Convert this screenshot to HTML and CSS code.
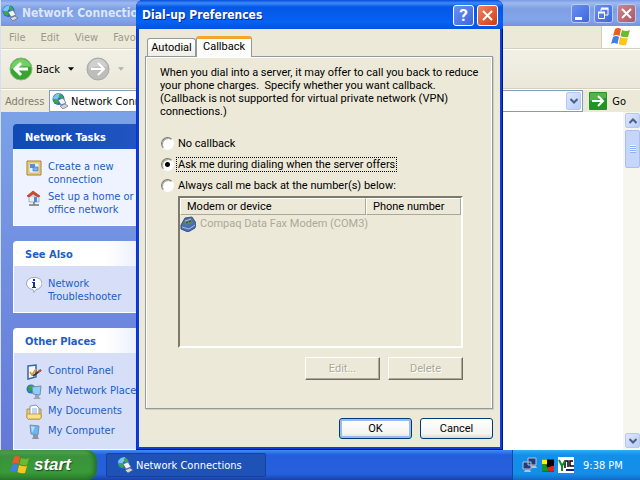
FILE: index.html
```html
<!DOCTYPE html>
<html lang="en">
<head>
    <meta charset="UTF-8">
    <meta name="viewport" content="width=device-width, initial-scale=1.0">
    <title>Network Connections</title>
    <link rel="stylesheet" href="styles.css">
</head>
<body>
    <!-- shared icons -->
    <svg class="defs" aria-hidden="true">
        <symbol id="netconn" viewBox="0 0 16 16">
            <circle cx="6.500" cy="6" r="6" fill="#2468d2"/>
            <path d="M1 4 4 1 8 0 9 3 6 5 5 8 2 8Z" fill="#7cc3f2"/>
            <path d="M7 1 10 2 12 6 9 6 7 4ZM2 6 5 6 7 9 5 11 2 9Z" fill="#38ad3f"/>
            <path d="M6 7 11 5 14 10 9 12Z" fill="#eef3f8" stroke="#5c6f8e" stroke-width=".8"/>
            <path d="M8 13 13 11 16 13 11 16Z" fill="#d5d8de" stroke="#5b6474" stroke-width=".7"/>
        </symbol>
        <symbol id="flag" viewBox="0 0 20 20">
            <path d="M4 2Q7 0 10 2L8.500 9Q5 7 2 9Z" fill="#ee5a24"/>
            <path d="M11 3Q15 5 19 3L17 10Q13 11 9.500 9Z" fill="#6dba2c"/>
            <path d="M2 10Q5 8 8 10L6.500 17Q3 15 0 17Z" fill="#3f7fe6"/>
            <path d="M9 10Q13 12 17 11L15 18Q11 19 7.500 17Z" fill="#fbc61c"/>
        </symbol>
        <symbol id="chevron" viewBox="0 0 8 6">
            <path d="M0.500 1 4 4.500 7.500 1" fill="none" stroke="#4d6185" stroke-width="2"/>
        </symbol>
    </svg>

    <div class="desktop">
        <div class="window">
            <div class="titlebar">
                <svg class="icon16"><use href="#netconn"/></svg>
                <h1>Network Connections</h1>
                <button class="win-btn" aria-label="Minimize"><svg viewBox="0 0 19 19"><path d="M4 13h7v3H4z" fill="#fff"/></svg></button>
                <button class="win-btn" aria-label="Restore"><svg viewBox="0 0 19 19"><path d="M7 7V5h7v6h-3M4.500 8.500h6v6h-6z" fill="none" stroke="#fff"/><path d="M7 4.500h7.500M4 8.500h7" stroke="#fff" stroke-width="2"/></svg></button>
                <button class="win-btn close" aria-label="Close"><svg viewBox="0 0 19 19"><path d="m5 5 9 9M14 5l-9 9" stroke="#fff" stroke-width="2"/></svg></button>
            </div>
            <div class="menubar">
                <button>File</button>
                <button>Edit</button>
                <button>View</button>
                <button>Favorites</button>
                <div class="brand"><svg><use href="#flag"/></svg></div>
            </div>
            <div class="toolbar">
                <button class="nav-btn">
                    <svg class="round" viewBox="0 0 24 24"><circle cx="12" cy="12" r="11" fill="#37a52e" stroke="#86b87d"/><path d="M2 12a10 9 0 0 1 20-2Q12 8 2 12Z" fill="#74cf62"/><path d="M19 12H7m5-6-6 6 6 6" fill="none" stroke="#fff" stroke-width="3"/></svg>
                    Back
                    <svg class="drop" viewBox="0 0 5 3"><path d="M0 0h5L2.500 3Z" fill="#000"/></svg>
                </button>
                <button class="nav-btn" disabled aria-label="Forward">
                    <svg class="round" viewBox="0 0 24 24"><circle cx="12" cy="12" r="11" fill="#bdbdbb" stroke="#a8a8a6"/><path d="M3 12a9 9 0 0 1 18-2Q12 8 3 12Z" fill="#d0d0ce"/><path d="M5 12h12m-5-6 6 6-6 6" fill="none" stroke="#fff" stroke-width="2"/></svg>
                    <svg class="drop" viewBox="0 0 5 3"><path d="M0 0h5L2.500 3Z" fill="#b5b2a4"/></svg>
                </button>
            </div>
            <div class="addressbar">
                <label for="address">Address</label>
                <div class="combo">
                    <svg class="icon16"><use href="#netconn"/></svg>
                    <input type="text" id="address" value="Network Connections">
                    <button class="scroll-btn" aria-label="Show addresses"><svg class="chev"><use href="#chevron"/></svg></button>
                </div>
                <button class="go"><svg viewBox="0 0 18 18"><rect width="18" height="18" rx="1" fill="#1f9428"/><path d="M1 1h16v5L1 9Z" fill="#4fb351"/><path d="M3 9h11M9 4l5 5-5 5" fill="none" stroke="#fff" stroke-width="2"/></svg>Go</button>
            </div>
            <div class="content">
                <div class="sidebar">
                    <div class="panel primary">
                        <h2>Network Tasks</h2>
                        <ul>
                            <li>
                                <svg class="icon16" viewBox="0 0 16 16"><path d="M1 1h14v14H1z" fill="#f0d27c" stroke="#a5822c"/><path d="M3 3h10v10H3z" fill="#e6f1fc" stroke="#c3a04b" stroke-width=".5"/><path d="M4 4h5v4H4z" fill="#4f92dd"/><path d="M7 7h5v4H7z" fill="#78b5ef" stroke="#3c69a8" stroke-width=".6"/></svg>
                                <a href="#">Create a new<br>connection</a>
                            </li>
                            <li>
                                <svg class="icon16" viewBox="0 0 16 16"><path d="M3 6h10v6H3z" fill="#e9eef5" stroke="#8a96ab" stroke-width=".7"/><path d="M8 7h3v5H8z" fill="#4b8bd6"/><path d="M1 6 7 1l7 5-2 1-5-3-4 3Z" fill="#d4492b" stroke="#9a2c1a" stroke-width=".6"/><path d="M8 12v3M3 15h10" stroke="#6c7a80" stroke-width="1.500"/></svg>
                                <a href="#">Set up a home or small<br>office network</a>
                            </li>
                        </ul>
                    </div>
                    <div class="panel">
                        <h2>See Also</h2>
                        <ul>
                            <li>
                                <svg class="icon16" viewBox="0 0 16 16"><path d="M8 .5A7 6 0 0 1 10 12.500L8 15.500 7 12.500A7 6 0 0 1 8 .5Z" fill="#fbfdff" stroke="#9aa9bd"/><path d="M7 2h2v2H7zM6 5h3v5h1v1H6v-1h1V6H6z" fill="#17309c"/></svg>
                                <a href="#">Network<br>Troubleshooter</a>
                            </li>
                        </ul>
                    </div>
                    <div class="panel places">
                        <h2>Other Places</h2>
                        <ul>
                            <li>
                                <svg class="icon16" viewBox="0 0 16 16"><path d="M2 2 10 1v12l-8 2Z" fill="#f5f9ff" stroke="#3565a8" stroke-width="1.500"/><path d="m4 8 2 3 4-6" fill="none" stroke="#e79b25" stroke-width="1.800"/><path d="m7 12 8-6" stroke="#2c3a54" stroke-width="2"/><path d="m12 8 3-2" stroke="#c94d2b" stroke-width="2"/></svg>
                                <a href="#">Control Panel</a>
                            </li>
                            <li>
                                <svg class="icon16" viewBox="0 0 16 16"><circle cx="5" cy="5" r="4.500" fill="#2c72cf"/><path d="M2 2 7 1 6 6 3 8Z" fill="#35a53c"/><path d="M6 3 15 2 14 11 7 10Z" fill="#8bd0fa" stroke="#7a8ba8"/><path d="M9 11h4v2l2 2H7l2-2Z" fill="#99a4bb"/></svg>
                                <a href="#">My Network Places</a>
                            </li>
                            <li>
                                <svg class="icon16" viewBox="0 0 16 16"><path d="M1 5h14v9l-1 1H2l-1-1Z" fill="#f2cf65" stroke="#b68d2d"/><path d="M4 2 10 1l3 3v8H4Z" fill="#fff" stroke="#7d98c4"/><path d="M6 5h5M6 7h5M6 9h5" stroke="#86a9dd"/><path d="M1 10h14v4l-1 1H2l-1-1Z" fill="#fae18b" stroke="#b68d2d" stroke-width=".7"/></svg>
                                <a href="#">My Documents</a>
                            </li>
                            <li>
                                <svg class="icon16" viewBox="0 0 16 16"><path d="M4 1 13 2 12 11 5 10Z" fill="#67b7f5" stroke="#7f8ca6"/><path d="M5 2 9 3 6 9Z" fill="#b4defb"/><path d="M7 11h5v2l1 2H6l1-2Z" fill="#8893ad"/></svg>
                                <a href="#">My Computer</a>
                            </li>
                        </ul>
                    </div>
                </div>
                <div class="files"></div>
                <div class="scrollbar">
                    <button class="scroll-btn" aria-label="Scroll up"><svg class="chev up"><use href="#chevron"/></svg></button>
                    <div class="thumb"></div>
                    <button class="scroll-btn down" aria-label="Scroll down"><svg class="chev"><use href="#chevron"/></svg></button>
                </div>
            </div>
        </div>

        <div class="taskbar">
            <button class="start"><svg><use href="#flag"/></svg>start</button>
            <button class="task"><svg class="icon16"><use href="#netconn"/></svg>Network Connections</button>
            <div class="tray">
                <svg class="icon16" viewBox="0 0 16 16"><path d="M6 1h8v7H6zM1 5h8v7H1z" fill="#223c79" stroke="#b9c0d6"/><path d="M3 13h5l1 2H2zM9 9h5l1 2h-5z" fill="#b9c0d6"/></svg>
                <svg class="icon12" viewBox="0 0 12 12"><path d="M0 0h12v12H0z" fill="#000"/><path d="M0 0h5v5H0z" fill="#fff200"/><path d="M0 5h4l3 7H0z" fill="#0b9c22"/><path d="m5 8 7-2v6H7z" fill="#e2231a"/></svg>
                <svg class="icon16" viewBox="0 0 16 16"><path d="M0 0h16v16H0z" fill="#fff"/><path d="M7 11V4h3v6M15 4h-3v5h4" fill="none" stroke="#000" stroke-width="1.500"/><path d="M8 12h8v2H8z" fill="#16207c"/><path d="m1 3 3 6 3-5M4 9v5" fill="none" stroke="#108a2d" stroke-width="2"/></svg>
                <span class="clock">9:38 PM</span>
            </div>
        </div>

        <form class="dialog">
            <div class="dialog-title">
                <h2>Dial-up Preferences</h2>
                <button type="button" class="win-btn help" aria-label="Help">?</button>
                <button type="button" class="win-btn close" aria-label="Close"><svg viewBox="0 0 19 19"><path d="m5 5 9 9M14 5l-9 9" stroke="#fff" stroke-width="2"/></svg></button>
            </div>
            <div class="dialog-body">
                <div class="tabs">
                    <button type="button" class="tab">Autodial</button>
                    <button type="button" class="tab active">Callback</button>
                </div>
                <div class="tab-panel">
                    <p>When you dial into a server, it may offer to call you back to reduce<br>your phone charges.&nbsp; Specify whether you want callback.<br>(Callback is not supported for virtual private network (VPN)<br>connections.)</p>
                    <div class="option"><input type="radio" name="callback" id="none"><label for="none">No callback</label></div>
                    <div class="option"><input type="radio" name="callback" id="ask" checked><label for="ask" class="focused">Ask me during dialing when the server offers</label></div>
                    <div class="option"><input type="radio" name="callback" id="always"><label for="always">Always call me back at the number(s) below:</label></div>
                    <div class="list">
                        <table>
                            <thead>
                                <tr><th class="col-device">Modem or device</th><th>Phone number</th></tr>
                            </thead>
                            <tbody>
                                <tr>
                                    <td colspan="2">
                                        <div class="device">
                                            <svg class="icon16" viewBox="0 0 16 16"><path d="M1 9 5 2 12 1l4 6-1 5-7 4-7-3Z" fill="#4a6fae" stroke="#3b5180"/><path d="m4 5 7-2 2 4-8 2Z" fill="#66865f"/><path d="m5 5 6-2M2 11l7 2 6-4" fill="none" stroke="#a5bce8"/><path d="m6 7 2-1M9 6l2-1" stroke="#24375c"/></svg>
                                            Compaq Data Fax Modem (COM3)
                                        </div>
                                    </td>
                                </tr>
                            </tbody>
                        </table>
                    </div>
                    <div class="list-buttons">
                        <button type="button" class="classic-btn" disabled>Edit...</button>
                        <button type="button" class="classic-btn" disabled>Delete</button>
                    </div>
                </div>
                <div class="dialog-buttons">
                    <button type="button" class="xp-btn default">OK</button>
                    <button type="button" class="xp-btn">Cancel</button>
                </div>
            </div>
        </form>
    </div>
</body>
</html>
```
FILE: styles.css
```css
* {
    box-sizing: border-box;
}

body {
    margin: 0;
    font-family: 'DejaVu Sans Condensed', 'DejaVu Sans', sans-serif;
    font-size: 11px;
    line-height: 13px;
    color: #000;
}

button, input {
    font: inherit;
    color: inherit;
}

button {
    padding: 0;
    border: none;
    background: none;
    white-space: nowrap;
}

h1, h2, p, ul {
    margin: 0;
    padding: 0;
}

svg {
    display: block;
    flex: none;
}

.defs {
    position: absolute;
    width: 0;
    height: 0;
}

.icon16 {
    width: 16px;
    height: 16px;
}

.icon12 {
    width: 12px;
    height: 13px;
}

.desktop {
    display: flex;
    flex-direction: column;
    height: 100vh;
    overflow: hidden;
    position: relative;
}

/* main window */
.window {
    flex: 1;
    min-height: 0;
    display: flex;
    flex-direction: column;
    background: #ece9d8;
    border-left: 1px solid #d4def5;
}

.titlebar {
    display: flex;
    align-items: center;
    gap: 4px;
    height: 26px;
    padding: 0 4px 0 1px;
    background: linear-gradient(#7a9be6, #9db9f0 3px, #7f9fe2 9px, #83a5ea 19px, #7694dd);
}

.titlebar h1 {
    flex: 1;
    font-size: 12px;
    font-weight: bold;
    color: #dce6fa;
}

.win-btn {
    display: flex;
    align-items: center;
    justify-content: center;
    width: 19px;
    height: 19px;
    border: 1px solid #b9caf4;
    border-radius: 3px;
    background: linear-gradient(135deg, #6b90f2, #3c66dc);
    color: #fff;
}

.win-btn svg {
    width: 19px;
    height: 19px;
}

.win-btn.close {
    background: linear-gradient(135deg, #c98790, #a85a68);
}

.menubar {
    display: flex;
    align-items: stretch;
    gap: 15px;
    height: 23px;
    padding-left: 8px;
    border-bottom: 1px solid #d6d0b8;
    color: #9c998c;
}

.brand {
    display: flex;
    align-items: center;
    justify-content: center;
    width: 39px;
    margin-left: auto;
    background: #fff;
    border-left: 1px solid #d6d0b8;
}

.brand svg {
    width: 20px;
    height: 20px;
}

.toolbar {
    display: flex;
    align-items: center;
    gap: 12px;
    height: 40px;
    padding-left: 8px;
    border-top: 1px solid #fff;
    border-bottom: 1px solid #d6d0b8;
    background: linear-gradient(#f2f0e6, #ebe8da);
}

.nav-btn {
    display: flex;
    align-items: center;
    gap: 3px;
}

.round {
    width: 24px;
    height: 24px;
}

.drop {
    width: 6px;
    height: 4px;
    margin-left: 5px;
}

.addressbar {
    display: flex;
    align-items: center;
    height: 23px;
    padding: 0 14px 0 4px;
    border-top: 1px solid #fff;
}

.addressbar label {
    width: 44px;
    color: #7f7c70;
}

.combo {
    flex: 1;
    display: flex;
    align-items: center;
    gap: 3px;
    height: 22px;
    padding: 1px 1px 1px 2px;
    border: 1px solid #7f9db9;
    background: #fff;
}

.combo input {
    flex: 1;
    min-width: 0;
    padding: 0;
    border: none;
    outline: none;
    background: none;
}

.scroll-btn {
    display: flex;
    align-items: center;
    justify-content: center;
    width: 15px;
    height: 18px;
    border: 1px solid #b6c9f3;
    border-radius: 2px;
    background: linear-gradient(135deg, #dce7fe, #b9cdf8);
}

.chev {
    width: 8px;
    height: 6px;
}

.chev.up {
    transform: rotate(180deg);
}

.go {
    display: flex;
    align-items: center;
    gap: 5px;
    margin-left: 6px;
}

.go svg {
    width: 18px;
    height: 18px;
}

.content {
    flex: 1;
    min-height: 0;
    display: flex;
    overflow: hidden;
}

.sidebar {
    width: 210px;
    padding: 12px;
    display: flex;
    flex-direction: column;
    gap: 15px;
    overflow: hidden;
    background: linear-gradient(#7ba2e7, #6478d8);
}

.panel {
    flex: none;
}

.panel h2 {
    height: 25px;
    padding-left: 12px;
    border-radius: 4px 4px 0 0;
    background: linear-gradient(90deg, #fff 50%, #c6d3f7);
    font-size: 11px;
    line-height: 27px;
    color: #215dc6;
}

.panel.primary h2 {
    background: linear-gradient(90deg, #0f4ab5, #2a5bc7);
    color: #fff;
}

.panel ul {
    display: flex;
    flex-direction: column;
    gap: 4px;
    padding: 11px 12px 9px;
    border: 1px solid #fff;
    border-top: none;
    background: #d6dff7;
    list-style: none;
}

.panel.primary ul {
    background: #eff3ff;
}

.panel li {
    display: flex;
    gap: 6px;
    white-space: nowrap;
}

.panel li a {
    color: #215dc6;
    text-decoration: none;
}

.files {
    flex: 1;
    background: #fff;
}

.scrollbar {
    display: flex;
    flex-direction: column;
    align-items: center;
    gap: 2px;
    width: 17px;
    padding: 1px 0 2px 2px;
    background: #f6f5ee;
}

.scrollbar .scroll-btn {
    height: 15px;
}

.thumb {
    width: 15px;
    height: 38px;
    border: 1px solid #a9bff0;
    border-radius: 2px;
    background: repeating-linear-gradient(#eef4fe 0 1px, #8cb0f8 1px 2px) center / 6px 8px no-repeat, #c6d6fb;
}

.scroll-btn.down {
    margin-top: auto;
}

/* taskbar */
.taskbar {
    display: flex;
    align-items: center;
    height: 30px;
    background: linear-gradient(#3f8cf3, #245edb 5px, #2560dd 24px, #1941a5);
    color: #fff;
}

.start {
    display: flex;
    align-items: center;
    gap: 4px;
    width: 97px;
    height: 30px;
    padding-left: 10px;
    border-radius: 0 10px 10px 0;
    background: linear-gradient(#5eac56, #3c913c 6px, #389b38 22px, #2c7a2c);
    box-shadow: inset -3px 0 4px #23702a;
    font-family: 'Liberation Sans', sans-serif;
    font-size: 17px;
    font-weight: bold;
    font-style: italic;
    line-height: 20px;
    text-shadow: 1px 1px 1px #1d4d1d;
}

.start svg {
    width: 20px;
    height: 20px;
}

.task {
    display: flex;
    align-items: center;
    gap: 3px;
    width: 160px;
    height: 24px;
    margin-left: 9px;
    padding-left: 10px;
    border: 1px solid #173f9c;
    border-radius: 2px;
    background: #1e52b7;
}

.tray {
    display: flex;
    align-items: center;
    gap: 4px;
    width: 128px;
    height: 30px;
    margin-left: auto;
    padding-left: 9px;
    border-left: 1px solid #1042af;
    background: linear-gradient(#2bb0f5, #1290e8 5px, #138ee9 24px, #1168c4);
}

.clock {
    margin-left: 5px;
}

/* dialog */
.dialog {
    position: absolute;
    top: 0;
    left: 136px;
    width: 367px;
    padding: 0 3px 3px;
    border-radius: 7px 7px 0 0;
    background: #0a3fd8;
    box-shadow: inset -1px -1px #00138c, inset 1px 0 #0831d9;
    font-family: Roboto, 'Liberation Sans', sans-serif;
}

.dialog-title {
    display: flex;
    align-items: center;
    gap: 3px;
    height: 29px;
    margin: 0 -3px;
    padding: 2px 5px 0 6px;
    border-radius: 7px 7px 0 0;
    background: linear-gradient(#0a4ad8, #3a8bfb 3px, #0557e5 7px, #0562f5 22px, #0153e0);
}

.dialog-title h2 {
    flex: 1;
    font-family: 'DejaVu Sans Condensed', 'DejaVu Sans', sans-serif;
    font-size: 12px;
    color: #fff;
    text-shadow: 1px 1px #0a2a8c;
}

.dialog .win-btn {
    width: 21px;
    height: 21px;
    border-color: #fff;
}

.dialog .win-btn.close {
    background: linear-gradient(135deg, #ee8563, #d03c12);
}

.win-btn.help {
    font-size: 17px;
    font-weight: bold;
}

.dialog-body {
    padding: 7px 7px 8px 6px;
    background: #ece9d8;
}

.tabs {
    display: flex;
    align-items: flex-end;
    padding-left: 2px;
}

.tab {
    width: 49px;
    height: 18px;
    border: 1px solid #919b9c;
    border-bottom: none;
    border-radius: 3px 3px 0 0;
    background: linear-gradient(#fff, #f0efe5);
}

.tab.active {
    width: 56px;
    height: 21px;
    margin-bottom: -1px;
    padding-bottom: 3px;
    border-top: 3px solid #f5a52b;
    background: #fcfcfb;
    position: relative;
}

.tab-panel {
    padding: 9px 29px 28px 14px;
    border: 1px solid #919b9c;
    box-shadow: inset 1px 1px #fff, inset -1px 0 #fff, 1px 1px #d0cebf;
}

.tab-panel p {
    margin-bottom: 15px;
    white-space: nowrap;
}

.option {
    display: flex;
    align-items: center;
    gap: 2px;
    height: 21px;
}

.option input {
    appearance: none;
    width: 13px;
    height: 13px;
    margin: 0 0 0 1px;
    border: 1px solid;
    border-color: #7d7a6c #fff #fff #7d7a6c;
    border-radius: 50%;
    background: #fff;
    box-shadow: inset 1px 1px #aca899;
}

.option input:checked {
    background: radial-gradient(circle, #000 2px, #fff 3px);
}

.option label {
    padding: 0 1px;
    border: 1px solid transparent;
}

.option label.focused {
    border: 1px dotted #000;
}

.list {
    height: 152px;
    margin-left: 18px;
    border: 2px solid;
    border-color: #7d7a6c #fff #fff #7d7a6c;
}

.list table {
    width: 100%;
    border-collapse: separate;
    border-spacing: 0;
}

.list th {
    height: 17px;
    padding: 0 6px;
    border: 1px solid;
    border-color: #fff #aca899 #aca899 #fff;
    font-weight: normal;
    text-align: left;
}

.col-device {
    width: 186px;
}

.list td {
    padding: 0;
    color: #aca899;
}

.device {
    display: flex;
    align-items: center;
    gap: 4px;
    height: 17px;
}

.list-buttons {
    display: flex;
    justify-content: flex-end;
    gap: 8px;
    margin-top: 9px;
}

.classic-btn {
    width: 75px;
    height: 23px;
    border: 1px solid;
    border-color: #fff #716f64 #716f64 #fff;
    box-shadow: inset -1px -1px #aca899;
    color: #aca899;
    text-shadow: 1px 1px #fff;
}

.dialog-buttons {
    display: flex;
    justify-content: flex-end;
    gap: 8px;
    margin-top: 9px;
}

.xp-btn {
    width: 73px;
    height: 21px;
    border: 1px solid #003c74;
    border-radius: 3px;
    background: linear-gradient(#fff, #f3f3ef 80%, #d9d5c8);
}

.xp-btn.default {
    box-shadow: inset 0 0 0 2px #9db9ee;
}
```
